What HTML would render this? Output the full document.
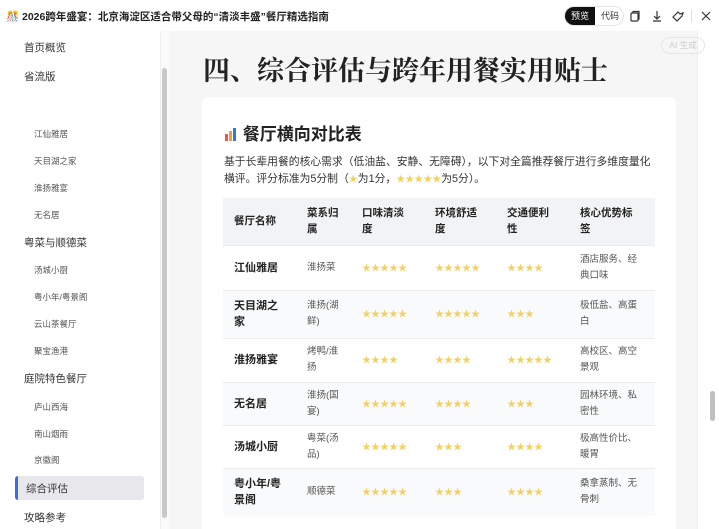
<!DOCTYPE html>
<html><head><meta charset="utf-8"><style>
*{margin:0;padding:0;box-sizing:border-box}
html,body{width:719px;height:529px;overflow:hidden}
body{background:#fff;font-family:"Liberation Sans","Noto Sans CJK SC",sans-serif;color:#222}
#w{position:relative;width:719px;height:529px;overflow:hidden}
.top{position:absolute;left:0;top:0;width:719px;height:31px;background:#fff}
.title{position:absolute;left:6px;top:9px;font-size:10.5px;font-weight:bold;color:#222;white-space:nowrap}
.tog{position:absolute;left:564px;top:6px;width:60px;height:20px;border:1px solid #e5e5e5;border-radius:10px;background:#fff}
.tog .a{position:absolute;left:0;top:0;width:30px;height:18px;border-radius:9px 0 0 9px;background:#111;color:#fff;font-size:9px;line-height:18px;text-align:center}
.tog .b{position:absolute;left:31px;top:0;width:28px;height:18px;font-size:9px;line-height:18px;text-align:center;color:#333}
.side{position:absolute;left:0;top:31px;width:160px;height:498px;background:#fff}
.side div{position:absolute;white-space:nowrap}
.l1{left:24px;font-size:10.5px;color:#333}
.l2{left:34px;font-size:8.5px;color:#555}
.act{position:absolute;left:15px;top:476px;width:129px;height:24px;background:#e8e8ec;border-left:3px solid #3b6fe0;border-radius:3px}
.sb{position:absolute;left:160px;top:31px;width:10px;height:498px;background:#fafafa;border-left:1px solid #eee}
.sbt{position:absolute;left:162px;top:68px;width:5px;height:450px;background:#c8c8c8;border-radius:3px}
.main{position:absolute;left:170px;top:31px;width:527px;height:498px;background:#f6f6f7}
.rs{position:absolute;left:697px;top:31px;width:22px;height:498px;background:#fff;border-left:1px solid #eee}
.rst{position:absolute;left:710px;top:391px;width:5px;height:30px;background:#c0c0c0;border-radius:3px}
.ai{position:absolute;left:661px;top:37px;width:44px;height:17px;border:1px solid #e6e6e6;border-radius:9px;font-size:8.5px;color:#ccc;text-align:center;line-height:15px}
h1{position:absolute;left:203px;top:49px;font-family:"Liberation Serif","Noto Serif CJK SC",serif;font-size:27px;font-weight:bold;color:#222;white-space:nowrap}
.card{position:absolute;left:202px;top:97px;width:474px;height:432px;background:#fff;border-radius:6px 6px 0 0}
h2{position:absolute;left:224px;top:120px;font-size:17px;font-weight:bold;white-space:nowrap;color:#222}
.p{position:absolute;left:224px;top:154px;font-size:10.8px;line-height:17px;color:#333;white-space:nowrap}
table{position:absolute;left:223px;top:198px;width:432px;border-collapse:collapse;font-size:10px}
td,th{padding:0 0 0 11px;text-align:left;vertical-align:middle;line-height:16px}
th{background:#f2f3f5;height:47px;font-weight:bold;color:#222;font-size:10.5px}
td{border-top:1px solid #ececec;color:#555;font-size:9.5px}
td.n{font-weight:bold;color:#222;font-size:11px}
tr.g td{background:#f9fafb}
.s{color:#f5d05e;font-size:9px}
</style></head><body><div id="w">
<div class="top">
<div class="title"><span style="color:#c9a">🎊</span> 2026跨年盛宴：北京海淀区适合带父母的“清淡丰盛”餐厅精选指南</div>
<div class="tog"><div class="a">预览</div><div class="b">代码</div></div>
<svg style="position:absolute;left:628px;top:9px" width="14" height="14" viewBox="0 0 14 14" fill="none" stroke="#333" stroke-width="1.2"><rect x="3" y="4" width="7" height="8" rx="1"/><path d="M5 4V2.5h6V10h-1"/></svg>
<svg style="position:absolute;left:650px;top:9px" width="14" height="14" viewBox="0 0 14 14" fill="none" stroke="#333" stroke-width="1.2"><path d="M7 2v8M4 7l3 3 3-3M3 12h8"/></svg>
<svg style="position:absolute;left:671px;top:9px" width="14" height="14" viewBox="0 0 14 14" fill="none" stroke="#333" stroke-width="1.2"><path d="M2 8l5-5 2 2 3-1-1 3-5 5z"/></svg>
<div style="position:absolute;left:691px;top:10px;width:1px;height:12px;background:#ddd"></div>
<svg style="position:absolute;left:700px;top:10px" width="12" height="12" viewBox="0 0 12 12" stroke="#333" stroke-width="1.2"><path d="M2 2l8 8M10 2l-8 8"/></svg>
</div>
<div class="side">
<div class="l1" style="top:9px">首页概览</div>
<div class="l1" style="top:38px">省流版</div>
<div class="l2" style="top:97px">江仙雅居</div>
<div class="l2" style="top:124px">天目湖之家</div>
<div class="l2" style="top:151px">淮扬雅宴</div>
<div class="l2" style="top:178px">无名居</div>
<div class="l1" style="top:204px">粤菜与顺德菜</div>
<div class="l2" style="top:233px">汤城小厨</div>
<div class="l2" style="top:260px">粤小年/粤景阁</div>
<div class="l2" style="top:287px">云山茶餐厅</div>
<div class="l2" style="top:314px">聚宝渔港</div>
<div class="l1" style="top:340px">庭院特色餐厅</div>
<div class="l2" style="top:370px">庐山西海</div>
<div class="l2" style="top:397px">南山烟雨</div>
<div class="l2" style="top:423px">京徽阁</div>
</div>
<div class="act"></div>
<div style="position:absolute;left:26px;top:481px;font-size:10.5px;color:#333">综合评估</div>
<div style="position:absolute;left:24px;top:510px;font-size:10.5px;color:#333">攻略参考</div>
<div class="sb"></div><div class="sbt"></div>
<div class="main"></div>
<div class="rs"></div><div class="rst"></div>
<div class="ai">AI 生成</div>
<h1>四、综合评估与跨年用餐实用贴士</h1>
<div class="card"></div>
<h2><span style="display:inline-block;width:14px;height:13px;vertical-align:-1px;position:relative"><i style="position:absolute;left:1px;bottom:0;width:3px;height:7px;background:#e55"></i><i style="position:absolute;left:5px;bottom:0;width:3px;height:10px;background:#f0a030"></i><i style="position:absolute;left:9px;bottom:0;width:3px;height:13px;background:#3b6fe0"></i></span> 餐厅横向对比表</h2>
<div class="p">基于长辈用餐的核心需求（低油盐、安静、无障碍），以下对全篇推荐餐厅进行多维度量化<br>横评。评分标准为5分制（<span class="s">★</span>为1分，<span class="s">★★★★★</span>为5分）。</div>
<table>
<colgroup><col style="width:73px"><col style="width:55px"><col style="width:73px"><col style="width:72px"><col style="width:73px"><col></colgroup>
<tr><th>餐厅名称</th><th>菜系归<br>属</th><th>口味清淡<br>度</th><th>环境舒适<br>度</th><th>交通便利<br>性</th><th>核心优势标<br>签</th></tr>
<tr style="height:45px"><td class="n">江仙雅居</td><td>淮扬菜</td><td class="s">★★★★★</td><td class="s">★★★★★</td><td class="s">★★★★</td><td>酒店服务、经<br>典口味</td></tr>
<tr class="g" style="height:48px"><td class="n">天目湖之<br>家</td><td>淮扬(湖<br>鲜)</td><td class="s">★★★★★</td><td class="s">★★★★★</td><td class="s">★★★</td><td>极低盐、高蛋<br>白</td></tr>
<tr style="height:44px"><td class="n">淮扬雅宴</td><td>烤鸭/淮<br>扬</td><td class="s">★★★★</td><td class="s">★★★★</td><td class="s">★★★★★</td><td>高校区、高空<br>景观</td></tr>
<tr class="g" style="height:43px"><td class="n">无名居</td><td>淮扬(国<br>宴)</td><td class="s">★★★★★</td><td class="s">★★★★</td><td class="s">★★★</td><td>园林环境、私<br>密性</td></tr>
<tr style="height:43px"><td class="n">汤城小厨</td><td>粤菜(汤<br>品)</td><td class="s">★★★★★</td><td class="s">★★★</td><td class="s">★★★★</td><td>极高性价比、<br>暖胃</td></tr>
<tr class="g" style="height:48px"><td class="n">粤小年/粤<br>景阁</td><td>顺德菜</td><td class="s">★★★★★</td><td class="s">★★★</td><td class="s">★★★★</td><td>桑拿蒸制、无<br>骨刺</td></tr>
</table>
</div></body></html>
